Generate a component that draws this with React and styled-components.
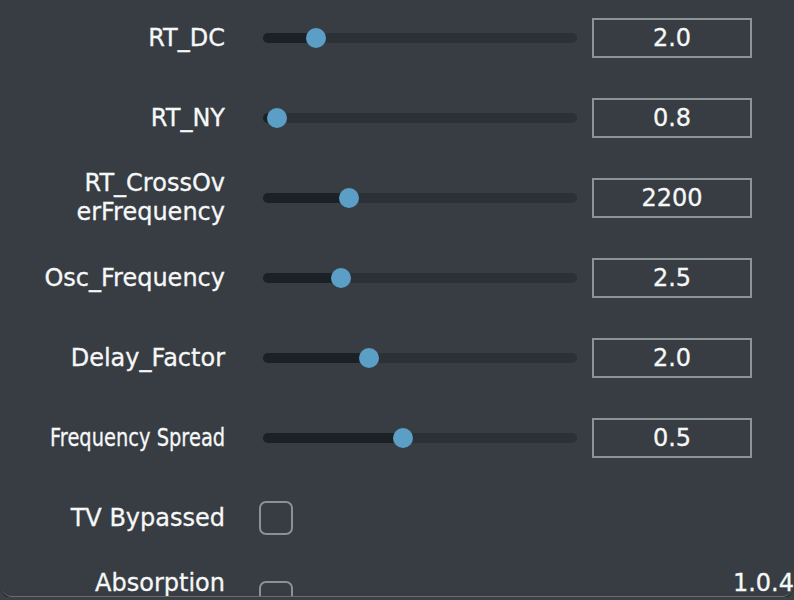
import React from 'react'
import styled, { createGlobalStyle } from 'styled-components'

const Global = createGlobalStyle`
  html, body {
    margin: 0;
    padding: 0;
    background: #3b4045;
    overflow: hidden;
  }
  body {
    font-family: "DejaVu Sans", "Liberation Sans", sans-serif;
  }
`

const Panel = styled.div`
  width: 794px;
  height: 596px;
  background: #373d43;
  border-radius: 0 0 12px 12px;
  border-bottom: 1px solid #676d71;
  box-shadow: 0 1px 0 #15181b;
  overflow: hidden;
`

const List = styled.div`
  margin-top: -2px;
`

const Row = styled.div`
  display: grid;
  grid-template-columns: 225px 38px 314px 15px 160px 1fr;
  align-items: center;
  height: 80px;
`

const Label = styled.div`
  grid-column: 1;
  justify-self: end;
  text-align: right;
  color: #f6f7f7;
  font-size: 24px;
  line-height: 29px;
  -webkit-text-stroke: 0.3px #f6f7f7;
  white-space: nowrap;
  transform-origin: right center;
  transform: ${p => `translateY(${p.$lift || 0}px) scaleX(${p.$squeeze || 1})`};
`

const Track = styled.div`
  grid-column: 3;
  position: relative;
  height: 10px;
  border-radius: 5px;
  background: #2b3137;
`

const Fill = styled.div`
  height: 100%;
  border-radius: 5px;
  background: #1c2125;
`

const Thumb = styled.div`
  position: absolute;
  top: 50%;
  width: 20px;
  height: 20px;
  margin: -10px 0 0 -10px;
  border-radius: 50%;
  background: #5b9fc6;
`

const ValueBox = styled.div`
  grid-column: 5;
  box-sizing: border-box;
  height: 40px;
  border: 2px solid #8b9496;
  display: flex;
  align-items: center;
  justify-content: center;
  color: #f6f7f7;
  font-size: 24px;
  -webkit-text-stroke: 0.3px #f6f7f7;
`

const Check = styled.div`
  grid-column: 3;
  box-sizing: border-box;
  width: 34px;
  height: 34px;
  margin-left: -4px;
  border: 2px solid #8a9294;
  border-radius: 7px;
`

const Version = styled.div`
  grid-column: 5 / 7;
  justify-self: end;
  color: #f6f7f7;
  font-size: 24px;
  -webkit-text-stroke: 0.3px #f6f7f7;
  transform: translateY(-15px);
`

const params = [
  { label: 'RT_DC', value: '2.0', pos: 0.146 },
  { label: 'RT_NY', value: '0.8', pos: 0.014 },
  { label: ['RT_CrossOv', 'erFrequency'], value: '2200', pos: 0.259 },
  { label: 'Osc_Frequency', value: '2.5', pos: 0.231 },
  { label: 'Delay_Factor', value: '2.0', pos: 0.327 },
  { label: 'Frequency Spread', value: '0.5', pos: 0.442, squeeze: 0.81 },
]

const Slider = ({ pos }) => {
  const x = 10 + pos * 294
  return (
    <Track>
      <Fill style={{ width: x }} />
      <Thumb style={{ left: x }} />
    </Track>
  )
}

export default function App() {
  return (
    <Panel>
      <Global />
      <List>
        {params.map((p, i) => (
          <Row key={i}>
            <Label $squeeze={p.squeeze}>
              {Array.isArray(p.label) ? p.label.map((l, j) => <div key={j}>{l}</div>) : p.label}
            </Label>
            <Slider pos={p.pos} />
            <ValueBox>{p.value}</ValueBox>
          </Row>
        ))}
        <Row>
          <Label>TV Bypassed</Label>
          <Check />
        </Row>
        <Row>
          <Label $lift={-15}>Absorption</Label>
          <Check />
          <Version>1.0.4</Version>
        </Row>
      </List>
    </Panel>
  )
}
